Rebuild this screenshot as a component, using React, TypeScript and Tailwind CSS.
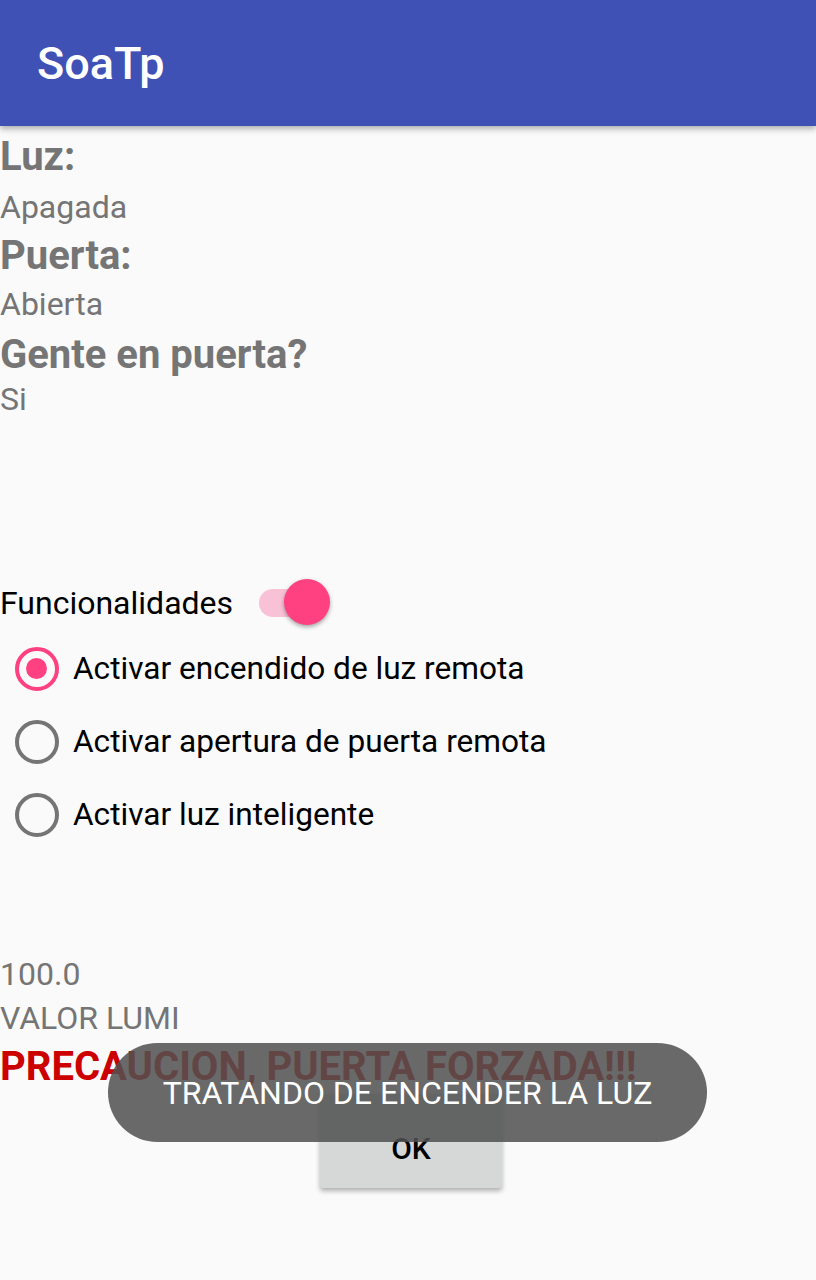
const Radio = ({ checked, label }: { checked?: boolean; label: string }) => (
  <div className="flex items-center h-[73px]">
    <div className="w-[73px] flex justify-center">
      <div
        className={
          checked
            ? "w-[44px] h-[44px] rounded-full border-[4px] border-[#FF4081] flex items-center justify-center"
            : "w-[44px] h-[44px] rounded-full border-[4px] border-[#757575]"
        }
      >
        {checked && <div className="w-[21px] h-[21px] rounded-full bg-[#FF4081]" />}
      </div>
    </div>
    <span className="text-[31.6px] text-black leading-none">{label}</span>
  </div>
);

const App = () => {
  return (
    <div
      className="relative w-[816px] h-[1280px] bg-[#FAFAFA] overflow-hidden"
      style={{ fontFamily: "Roboto, 'Noto Sans', sans-serif" }}
    >
      {/* app bar */}
      <div className="relative z-10 h-[126px] bg-[#3F51B5] flex items-center pl-[37px] shadow-[0_3px_6px_rgba(0,0,0,0.3)]">
        <h1 className="text-white text-[45px] font-medium leading-none">SoaTp</h1>
      </div>

      {/* estados */}
      <div className="text-[#757575] pt-[7px]">
        <div className="text-[40px] font-bold leading-[48px]">Luz:</div>
        <div className="text-[32px] leading-[52px]">Apagada</div>
        <div className="text-[40px] font-bold leading-[45px]">Puerta:</div>
        <div className="text-[32px] leading-[52px]">Abierta</div>
        <div className="text-[40px] font-bold leading-[49px]">Gente en puerta?</div>
        <div className="text-[32px] leading-[40px]">Si</div>
      </div>

      {/* funcionalidades */}
      <div className="mt-[159px] flex items-center h-[50px]">
        <span className="text-[32px] text-black leading-none">Funcionalidades</span>
        <div className="relative ml-[26px] w-[74px] h-[50px] flex items-center">
          <div className="w-[60px] h-[28px] rounded-full bg-[#F9C1D5]" />
          <div className="absolute left-[25px] top-[1px] w-[46px] h-[46px] rounded-full bg-[#FF4081] shadow-[0_2px_4px_rgba(0,0,0,0.35)]" />
        </div>
      </div>

      <div className="mt-[4px]">
        <Radio checked label="Activar encendido de luz remota" />
        <Radio label="Activar apertura de puerta remota" />
        <Radio label="Activar luz inteligente" />
      </div>

      {/* valores */}
      <div className="mt-[101px] text-[#757575]">
        <div className="text-[32px] leading-[44px]">100.0</div>
        <div className="text-[32px] leading-[44px]">VALOR LUMI</div>
        <div className="text-[40px] font-bold leading-[54px] text-[#CC0000]">PRECAUCION, PUERTA FORZADA!!!</div>
      </div>

      <div className="flex justify-center">
        <button className="w-[182px] h-[94px] ml-[6px] pt-[14px] bg-[#D6D7D7] rounded-[3px] shadow-[0_3px_5px_rgba(0,0,0,0.3)] text-[30px] font-medium text-black">
          OK
        </button>
      </div>

      {/* toast */}
      <div className="absolute left-[108px] top-[1043px] w-[599px] h-[99px] rounded-full bg-[rgba(80,80,80,0.86)] flex items-center justify-center">
        <span className="text-white text-[32px] leading-none">TRATANDO DE ENCENDER LA LUZ</span>
      </div>
    </div>
  );
};

export default App;
